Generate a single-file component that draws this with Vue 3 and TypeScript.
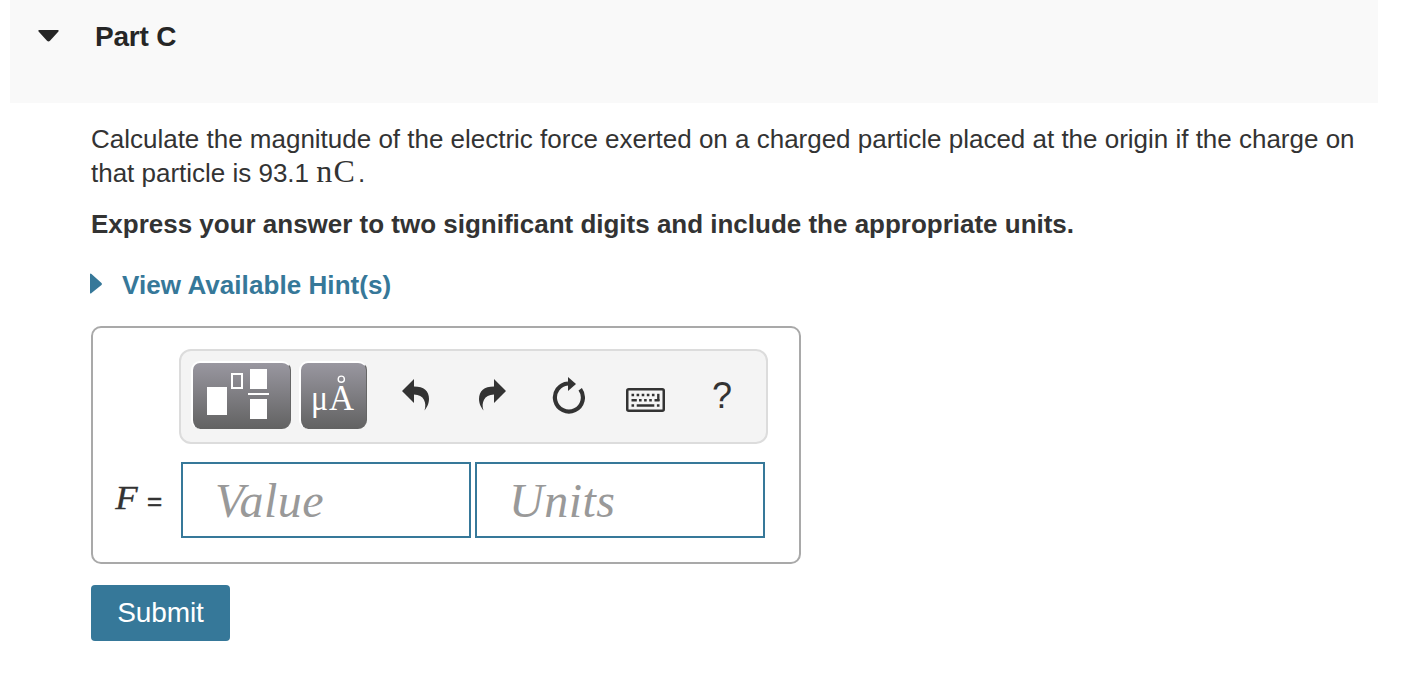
<script setup lang="ts">
import { ref } from 'vue'

const value = ref('')
const units = ref('')
</script>

<template>
  <main class="page">
    <header class="part-header">
      <svg class="caret" width="22" height="13" viewBox="0 0 22 13">
        <path d="M1.2 0H19.8Q21.4 .5 20.2 1.8L12 10.8Q10.5 12.4 9 10.8L.8 1.8Q-.4.5 1.2 0Z" fill="#262626" />
      </svg>
      <h2 class="part-title">Part C</h2>
    </header>

    <section class="content">
      <p class="question">
        <span class="line first">Calculate the magnitude of the electric force exerted on a charged particle placed at the origin if the charge on</span>
        <span class="line second">that particle is 93.1 <span class="unit">nC</span>.</span>
      </p>
      <p class="instruction"><span>Express your answer to two significant digits and include the appropriate units.</span></p>

      <a class="hints">
        <svg width="13" height="22" viewBox="0 0 13 22">
          <path d="M0 1Q.5 0 1.5 1L11.5 10Q12.5 11 11.5 12L1.5 20Q.5 21 0 20Z" fill="#367899" />
        </svg>
        <span>View Available Hint(s)</span>
      </a>

      <div class="answer">
        <div class="toolbar">
          <button class="tool templates" aria-label="Templates">
            <svg width="96" height="66" viewBox="0 0 96 66">
              <g fill="#fff">
                <rect x="14" y="24" width="20" height="28" />
                <rect x="57" y="6" width="17" height="20" />
                <rect x="55" y="30" width="21" height="2" />
                <rect x="57" y="36" width="17" height="20" />
              </g>
              <rect x="39" y="11" width="10" height="14" fill="none" stroke="#fff" stroke-width="2" />
            </svg>
          </button>
          <button class="tool symbols" aria-label="Units and symbols">
            <svg width="64" height="66" viewBox="0 0 64 66">
              <text class="glyph" x="10" y="47" textLength="17" lengthAdjust="spacingAndGlyphs">μ</text>
              <text class="glyph" x="28" y="47" textLength="25" lengthAdjust="spacingAndGlyphs">A</text>
              <circle cx="40.3" cy="16.2" r="3.1" fill="none" stroke="#fff" stroke-width="1.4" />
            </svg>
          </button>
          <button class="icon undo" aria-label="Undo">
            <svg width="28" height="32" viewBox="0 0 28 32">
              <path d="M0 12 12 0V7.5C22 7.5 27 12 27 20C27 25 24.5 29 22.5 31.5C25 24 22 15.5 12 15.5V24Z" fill="#333" />
            </svg>
          </button>
          <button class="icon redo" aria-label="Redo">
            <svg width="28" height="32" viewBox="0 0 28 32">
              <path d="M27 12 15 0V7.5C5 7.5 0 12 0 20C0 25 2.5 29 4.5 31.5C2 24 5 15.5 15 15.5V24Z" fill="#333" />
            </svg>
          </button>
          <button class="icon reset" aria-label="Reset">
            <svg width="34" height="37" viewBox="0 0 34 37">
              <path d="M16 6.5A14 14 0 1 0 28.2 12.2" fill="none" stroke="#333" stroke-width="4.2" />
              <path d="M16 0 24 7 16 14Z" fill="#333" />
            </svg>
          </button>
          <button class="icon keyboard" aria-label="Keyboard">
            <svg width="39" height="24" viewBox="0 0 39 24">
              <rect x="1.25" y="1.25" width="36.5" height="21.5" rx="1.5" fill="none" stroke="#333" stroke-width="2.5" />
              <g fill="none" stroke="#333" stroke-width="2.4">
                <path d="M5.5 7H30" stroke-dasharray="2.6 2.5" />
                <path d="M13 12.2H27" stroke-dasharray="2.6 2.5" />
                <path d="M5.5 12.2H10.8M28.5 12.2H33.5M5.5 17.5H8.1M10.7 17.5H28.3M30.9 17.5H33.5" />
                <path d="M32.3 5.8V13" />
              </g>
            </svg>
          </button>
          <button class="icon help">?</button>
        </div>
        <div class="entry">
          <label class="label"><i>F</i><span>=</span></label>
          <input v-model="value" class="field value" placeholder="Value" />
          <input v-model="units" class="field units" placeholder="Units" />
        </div>
      </div>

      <button class="submit"><span>Submit</span></button>
    </section>
  </main>
</template>

<style>
body {
  background: #fff;
}
</style>

<style scoped>
* {
  box-sizing: border-box;
}

.page {
  height: 688px;
  padding-left: 10px;
  overflow: hidden;
  color: #333;
  font-family: "Liberation Sans", Arial, sans-serif;
  font-size: 26px;
  white-space: nowrap;
}

button {
  padding: 0;
  border: 0;
  font-family: inherit;
}

svg {
  display: block;
  flex: none;
}

.part-header {
  display: flex;
  width: 1368px;
  height: 103px;
  padding: 20px 0 0 28px;
  background: #f9f9f9;
}

.caret {
  margin-top: 10px;
}

.part-title {
  margin: 1px 0 0 35px;
  color: #262626;
  font-size: 28px;
  line-height: 32px;
  letter-spacing: -0.2px;
}

.content {
  padding: 19px 0 0 81px;
}

.question,
.instruction {
  margin: 0;
}

.line {
  display: block;
  height: 34px;
  line-height: 34px;
  letter-spacing: -0.01px;
}

.unit {
  margin-right: 2px;
  font-family: "Liberation Serif", serif;
  font-size: 32px;
  line-height: 30px;
  letter-spacing: 1.2px;
}

.instruction {
  margin-top: 17px;
  font-weight: 700;
  line-height: 34px;
  letter-spacing: -0.01px;
}

.hints {
  display: flex;
  align-items: center;
  height: 34px;
  margin-top: 27px;
  color: #367899;
  font-weight: 700;
  letter-spacing: 0.07px;
}

.hints svg {
  margin: -3px 19px 0 -1px;
}

.answer {
  width: 710px;
  height: 238px;
  margin-top: 24px;
  padding: 21px 0 0 20px;
  border: 2px solid #a9a9a9;
  border-radius: 10px;
}

.toolbar {
  display: flex;
  align-items: flex-start;
  width: 589px;
  height: 95px;
  margin-left: 66px;
  padding-top: 10px;
  padding-left: 10px;
  border: 2px solid #dcdcdc;
  border-radius: 12px;
  background: #f4f4f4;
}

.tool {
  height: 68px;
  flex: none;
  border-top: 2px solid #fff;
  border-left: 2px solid #fff;
  border-radius: 9px;
  background: linear-gradient(#9997a0, #626262);
}

.templates {
  width: 100px;
  border-right: 1px solid #666;
}

.symbols {
  width: 68px;
  margin-left: 8px;
  border-right: 1px solid #666;
}

.glyph {
  fill: #fff;
  font-family: "Liberation Serif", serif;
  font-size: 35px;
}

.icon {
  display: flex;
  flex: none;
  color: #333;
  background: transparent;
}

.undo {
  margin: 18px 0 0 35px;
}

.redo {
  margin: 18px 0 0 49px;
}

.reset {
  margin: 16px 0 0 45px;
}

.keyboard {
  margin: 27px 0 0 40px;
}

.help {
  margin: 15px 0 0 47px;
  font-size: 36px;
  line-height: 40px;
}

.entry {
  display: flex;
  margin-top: 18px;
}

.label {
  display: flex;
  width: 68px;
  padding-top: 18px;
  line-height: 36px;
}

.label i {
  width: 33px;
  padding-left: 2px;
  font-family: "Liberation Serif", serif;
  font-size: 34px;
  -webkit-text-stroke: 0.3px #333;
  transform: scaleX(1.08);
  transform-origin: left;
}

.label span {
  padding-top: 3px;
  padding-left: 1px;
  -webkit-text-stroke: 0.5px #333;
}

.field {
  width: 290px;
  height: 76px;
  margin-right: 4px;
  padding: 0 0 0 32px;
  border: 2px solid #367899;
  border-radius: 0;
  outline: 0;
  background: #fff;
  font: italic 48px "Liberation Serif", serif;
  letter-spacing: 0.5px;
}

.field::placeholder {
  color: #999;
  opacity: 1;
}

.submit {
  width: 139px;
  height: 56px;
  margin-top: 21px;
  border-radius: 4px;
  color: #fff;
  background: #367899;
  font-size: 28px;
}

.submit span {
  letter-spacing: -0.1px;
}
</style>
